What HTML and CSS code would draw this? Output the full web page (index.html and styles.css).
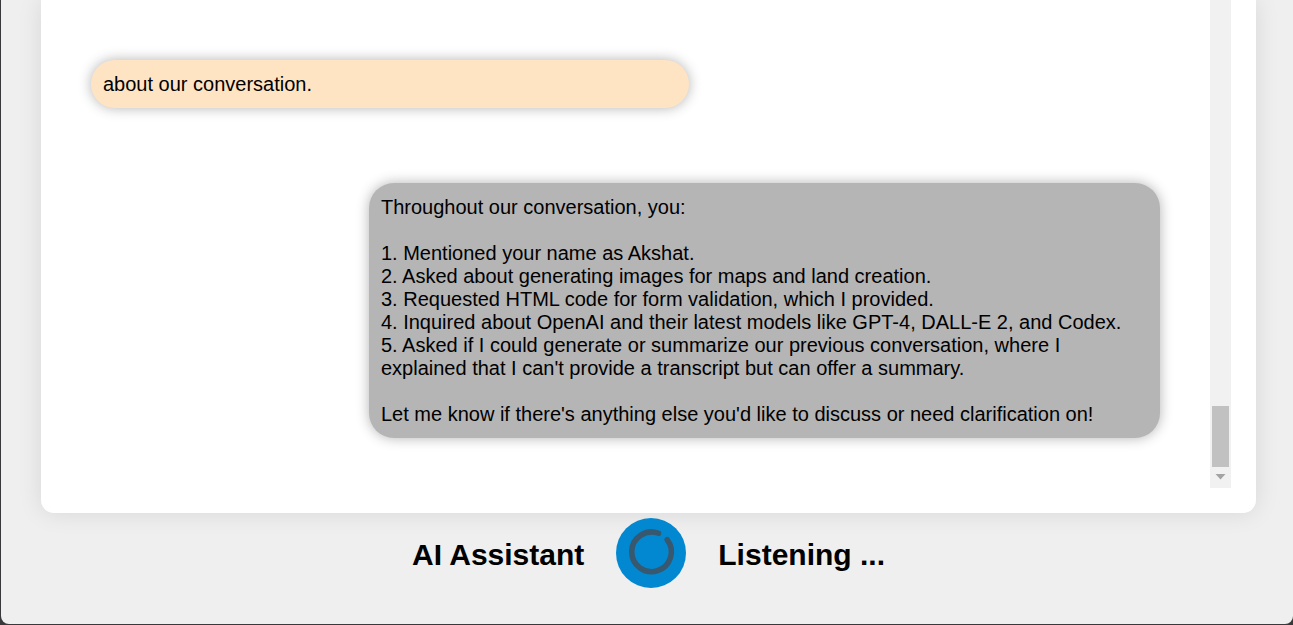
FILE: index.html
```html
<!DOCTYPE html>
<html lang="en">
<head>
<meta charset="utf-8">
<meta name="viewport" content="width=device-width, initial-scale=1">
<title>AI Assistant</title>
<link rel="stylesheet" href="styles.css">
</head>
<body>
<div class="window">
  <main class="card">
    <section class="chat" aria-label="Conversation">
      <p class="message message-user">about our conversation.</p>
      <div class="message message-ai">Throughout our conversation, you:<br><br>1. Mentioned your name as Akshat.<br>2. Asked about generating images for maps and land creation.<br>3. Requested HTML code for form validation, which I provided.<br>4. Inquired about OpenAI and their latest models like GPT-4, DALL-E 2, and Codex.<br>5. Asked if I could generate or summarize our previous conversation, where I explained that I can't provide a transcript but can offer a summary.<br><br>Let me know if there's anything else you'd like to discuss or need clarification on!</div>
    </section>
    <div class="scrollbar" aria-hidden="true">
      <div class="thumb"></div>
      <svg class="arrow" viewBox="0 0 21 21"><path d="M5.500 7h10l-5 5.500z"/></svg>
    </div>
  </main>
  <footer class="controls">
    <h1 class="label">AI Assistant</h1>
    <button class="mic" type="button" aria-label="Listening">
      <svg class="ring" viewBox="0 0 70 70"><path d="M42.600 15.300A19.800 19.800 0 1 0 51.200 21.700"/></svg>
    </button>
    <h2 class="label">Listening ...</h2>
  </footer>
</div>
</body>
</html>
```
FILE: styles.css
```css
* {
  box-sizing: border-box;
}

body {
  margin: 0;
  min-height: 100vh;
  display: flex;
  background: #39393b;
  font-family: "Liberation Sans", Arial, sans-serif;
  color: #000;
}

.window {
  flex: 1;
  min-width: 0;
  margin: 0 0 1px 1px;
  padding: 0 37px 0 40px;
  background: #efefef;
  border-radius: 0 0 8px 8px;
}

.card {
  display: flex;
  padding: 0 25px 25px;
  background: #fff;
  border-radius: 0 0 13px 13px;
  box-shadow: 0 0 25px rgba(0, 0, 0, 0.1);
}

.chat {
  flex: 1;
  min-width: 0;
  display: flex;
  flex-direction: column;
  gap: 75px;
  padding: 60px 50px 50px 25px;
}

.message {
  margin: 0;
  padding: 13px 12px 12px;
  border-radius: 25px;
  box-shadow: 0 0 13px rgba(0, 0, 0, 0.3);
  font-size: 20px;
  line-height: 23px;
}

.message-user {
  align-self: flex-start;
  width: 55.9%;
  background: #ffe4c4;
}

.message-ai {
  align-self: flex-end;
  width: 74%;
  background: #b5b5b5;
}

.scrollbar {
  flex: none;
  width: 21px;
  display: flex;
  flex-direction: column;
  justify-content: flex-end;
  background: #f1f1f1;
}

.thumb {
  height: 61px;
  margin: 0 2px;
  background: #c1c1c1;
}

.arrow {
  width: 21px;
  height: 21px;
  fill: #a3a3a3;
}

.controls {
  display: flex;
  align-items: center;
  justify-content: center;
  gap: 32px;
  padding: 5px 0 36px;
}

.label {
  margin: 0;
  padding-top: 4px;
  font-size: 30px;
  line-height: 36px;
}

.mic {
  width: 70px;
  height: 70px;
  padding: 0;
  border: 0;
  border-radius: 50%;
  background: #0288d1;
}

.ring {
  display: block;
  width: 70px;
  height: 70px;
  fill: none;
  stroke: #37586f;
  stroke-width: 5.5;
  stroke-linecap: round;
}
```
